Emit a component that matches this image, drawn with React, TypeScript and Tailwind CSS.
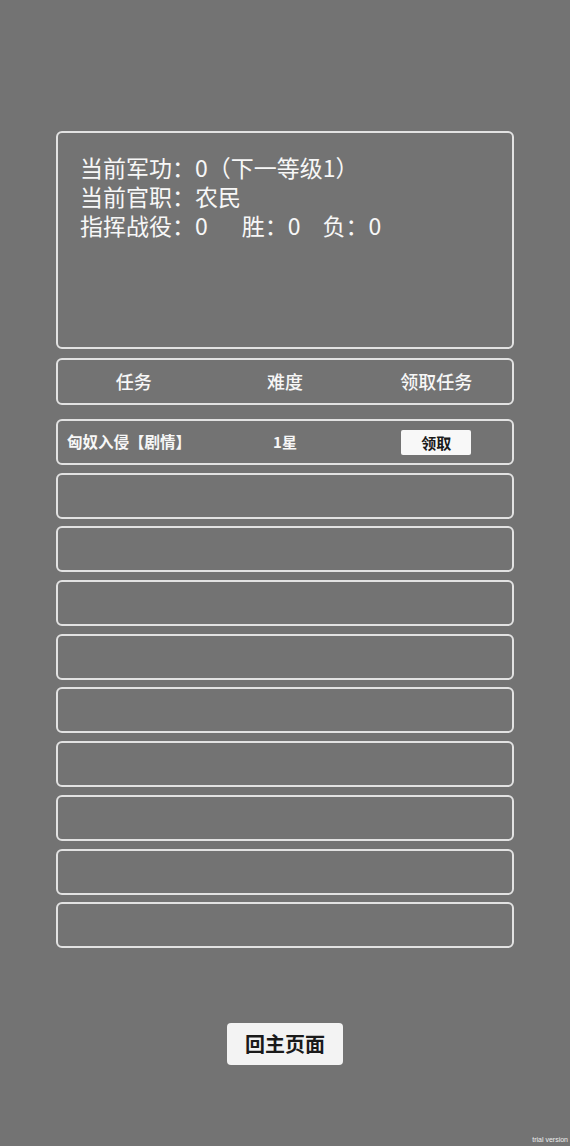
import React from 'react';

const font = { fontFamily: '"Noto Sans CJK SC", "Noto Sans", sans-serif' };

const rows = [
    { name: '匈奴入侵【剧情】', level: '1星' },
    null, null, null, null, null, null, null, null, null,
];

const App: React.FC = () => {
    return (
        <div
            className="w-full h-[1146px] bg-[#737373] flex flex-col items-center pt-[131px] text-[#f7f7f7] overflow-hidden"
            style={font}
        >
            <div className="w-[458px] flex flex-col">
                {/* Status panel */}
                <div className="h-[218px] border-2 border-[#e2e2e2] rounded-[6px] pl-[22px] pt-[20px] text-[23px] leading-[29px]">
                    <p>当前军功：0（下一等级1）</p>
                    <p>当前官职：农民</p>
                    <p>
                        指挥战役：0<span className="ml-[34px]">胜：0</span>
                        <span className="ml-[22px]">负：0</span>
                    </p>
                </div>

                {/* Header */}
                <div className="mt-[9px] h-[47px] border-2 border-[#e2e2e2] rounded-[6px] grid grid-cols-3 items-center text-[18px] font-medium">
                    <span className="text-center">任务</span>
                    <span className="text-center">难度</span>
                    <span className="text-center">领取任务</span>
                </div>

                {/* Task list */}
                <div className="mt-[14px] flex flex-col gap-[7.7px]">
                    {rows.map((row, i) => (
                        <div
                            key={i}
                            className="h-[46px] border-2 border-[#e2e2e2] rounded-[6px] grid grid-cols-3 items-center"
                        >
                            {row && (
                                <>
                                    <span className="pl-[9px] text-[15.5px] font-bold whitespace-nowrap">{row.name}</span>
                                    <span className="text-center text-[15px] font-bold">{row.level}</span>
                                    <div className="flex justify-center">
                                        <button className="w-[70px] h-[25px] bg-[#f8f8f8] rounded-[2px] text-[#1a1a1a] text-[15px] font-bold leading-none">
                                            领取
                                        </button>
                                    </div>
                                </>
                            )}
                        </div>
                    ))}
                </div>
            </div>

            <button className="mt-[75px] w-[116px] h-[42px] bg-[#f3f3f3] rounded-[4px] text-[#1a1a1a] text-[20px] font-bold">
                回主页面
            </button>

            <span className="mt-auto self-end mr-[2px] mb-[3px] text-[7px] leading-none text-[#eeeeee] font-['Liberation_Sans',sans-serif]">
                trial version
            </span>
        </div>
    );
};

export default App;
